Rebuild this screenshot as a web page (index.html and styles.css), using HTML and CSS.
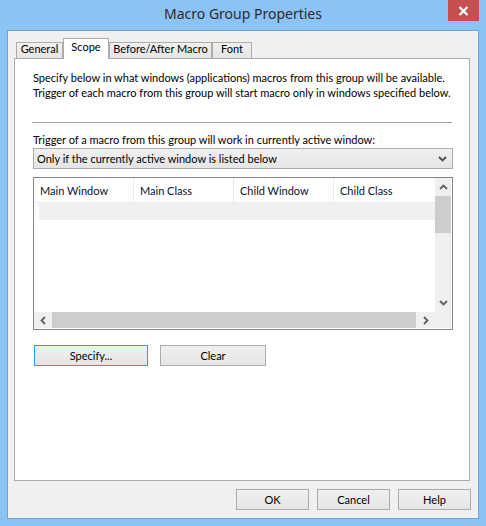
FILE: index.html
```html
<!DOCTYPE html>
<html>
<head>
<meta charset="utf-8">
<link rel="stylesheet" href="styles.css">
</head>
<body>
<div class="window">
  <div class="titlebar">
    <span class="tb-spacer"></span>
    <div class="title">Macro Group Properties</div>
    <div class="tb-right">
      <div class="close">
        <svg width="11" height="10" viewBox="0 0 11 10"><path d="M1.5 1 L9.5 9 M9.5 1 L1.5 9" stroke="#fff" stroke-width="2.2" fill="none"/></svg>
      </div>
    </div>
  </div>
  <div class="client">
    <div class="tabs">
      <div class="tab t-general">General</div>
      <div class="tab selected t-scope">Scope</div>
      <div class="tab t-ba">Before/After Macro</div>
      <div class="tab t-font">Font</div>
    </div>
    <div class="panel">
      <p class="intro">Specify below in what windows (applications) macros from this group will be available.<br>Trigger of each macro from this group will start macro only in windows specified below.</p>
      <div class="sep"></div>
      <div class="label">Trigger of a macro from this group will work in currently active window:</div>
      <div class="combo">
        <span>Only if the currently active window is listed below</span>
        <svg class="chev" width="9" height="6" viewBox="0 0 9 6"><path d="M1 1 L4.5 4.5 L8 1" stroke="#4d4d4d" stroke-width="1.8" fill="none"/></svg>
      </div>
      <div class="list">
        <div class="list-main">
          <div class="header">
            <div class="col">Main Window</div>
            <div class="col">Main Class</div>
            <div class="col">Child Window</div>
            <div class="col last">Child Class</div>
          </div>
          <div class="row-sel"></div>
        </div>
        <div class="vscroll">
          <div class="sb-btn v"><svg width="9" height="6" viewBox="0 0 9 6"><path d="M1 5 L4.5 1.5 L8 5" stroke="#606060" stroke-width="1.8" fill="none"/></svg></div>
          <div class="vthumb"></div>
          <div class="vtrack"></div>
          <div class="sb-btn v"><svg width="9" height="6" viewBox="0 0 9 6"><path d="M1 1 L4.5 4.5 L8 1" stroke="#606060" stroke-width="1.8" fill="none"/></svg></div>
        </div>
        <div class="hscroll">
          <div class="sb-btn h"><svg width="6" height="9" viewBox="0 0 6 9"><path d="M5 1 L1.5 4.5 L5 8" stroke="#606060" stroke-width="1.8" fill="none"/></svg></div>
          <div class="hthumb"></div>
          <div class="htrack"></div>
          <div class="sb-btn h"><svg width="6" height="9" viewBox="0 0 6 9"><path d="M1 1 L4.5 4.5 L1 8" stroke="#606060" stroke-width="1.8" fill="none"/></svg></div>
        </div>
        <div class="corner"></div>
      </div>
      <div class="actions">
        <button class="btn focused b-specify">Specify...</button>
        <button class="btn b-clear">Clear</button>
      </div>
    </div>
    <div class="footer">
      <button class="btn b-foot">OK</button>
      <button class="btn b-foot">Cancel</button>
      <button class="btn b-foot">Help</button>
    </div>
  </div>
</div>
</body>
</html>
```
FILE: styles.css
```css
* { box-sizing: border-box; }
html, body { margin: 0; padding: 0; }
body {
  width: 486px;
  height: 526px;
  overflow: hidden;
  font-family: "Lato", "Noto Sans", sans-serif;
  font-size: 11px;
  color: #000;
}
.window {
  width: 486px;
  height: 526px;
  background: #8cc3f6;
  display: flex;
  flex-direction: column;
}
.titlebar {
  height: 30px;
  display: grid;
  grid-template-columns: 1fr auto 1fr;
}
.title {
  margin-top: 4px;
  font-family: "Noto Sans", sans-serif;
  font-size: 14px;
  line-height: 20px;
  color: #2b2b2b;
  white-space: nowrap;
}
.tb-right {
  display: flex;
  justify-content: flex-end;
  align-items: flex-start;
  padding-right: 7px;
}
.close {
  width: 31px;
  height: 21px;
  background: #c7504f;
  display: flex;
  align-items: center;
  justify-content: center;
}
.client {
  margin: 0 7px;
  width: 472px;
  height: 489px;
  border: 1px solid #6fa3d6;
  background: #f0f0f0;
  display: flex;
  flex-direction: column;
}
.tabs {
  display: flex;
  align-items: flex-end;
  padding: 7px 0 0 8px;
  height: 28px;
  position: relative;
  z-index: 1;
}
.tab {
  height: 16px;
  margin-bottom: 1px;
  border: 1px solid #acacac;
  border-bottom: none;
  background: linear-gradient(#f0f0f0, #e5e5e5);
  text-align: center;
  line-height: 12px;
  padding-top: 0;
  white-space: nowrap;
}
.tab.selected {
  height: 21px;
  margin-bottom: 0;
  background: #fff;
  padding-top: 2px;
}
.t-general { width: 47px; }
.t-scope { width: 46px; }
.t-ba { width: 103px; }
.t-font { width: 40px; }
.panel {
  margin: -1px 0 0 6px;
  width: 456px;
  height: 423px;
  border: 1px solid #acacac;
  background: #fff;
  padding: 11px 16px 0 18px;
}
.intro {
  margin: 0;
  line-height: 15px;
  white-space: nowrap;
}
.sep {
  margin: 22px 1px 0 -1px;
  height: 1px;
  background: #a0a0a0;
}
.label {
  margin-top: 9px;
  line-height: 15px;
  white-space: nowrap;
}
.combo {
  margin-top: 1px;
  height: 21px;
  border: 1px solid #acacac;
  background: linear-gradient(#f0f0f0, #e5e5e5);
  display: flex;
  align-items: center;
  justify-content: space-between;
  padding: 0 5px 0 3px;
  line-height: 17px;
}
.list {
  margin-top: 8px;
  height: 153px;
  border: 1px solid #828790;
  padding: 0 1px 1px 0;
  display: grid;
  grid-template-columns: 1fr 16px;
  grid-template-rows: 1fr 16px;
  background: #fff;
}
.list-main { overflow: hidden; }
.header {
  display: flex;
  height: 25px;
  border-bottom: 1px solid #e5ecf6;
}
.col {
  width: 100px;
  flex: none;
  border-right: 1px solid #e5ecf6;
  padding: 1px 0 0 6px;
  line-height: 24px;
  color: #101030;
  white-space: nowrap;
}
.col.last { border-right: none; }
.row-sel {
  margin-left: 5px;
  height: 17px;
  background: #f0f0f0;
}
.vscroll {
  background: #f0f0f0;
  display: flex;
  flex-direction: column;
}
.hscroll {
  background: #f0f0f0;
  display: flex;
}
.corner { background: #f0f0f0; }
.sb-btn {
  display: flex;
  align-items: center;
  justify-content: center;
  flex: none;
}
.sb-btn.v { height: 18px; }
.sb-btn.h { width: 18px; }
.vthumb { height: 37px; background: #cdcdcd; flex: none; }
.vtrack { flex: 1; }
.hthumb { width: 364px; background: #cdcdcd; flex: none; }
.htrack { flex: 1; }
.actions {
  margin-top: 15px;
  display: flex;
}
.btn {
  font-family: inherit;
  font-size: 11px;
  color: #000;
  height: 21px;
  border: 1px solid #acacac;
  background: linear-gradient(#f0f0f0, #e5e5e5);
  line-height: 18px;
  padding: 1px 0 0 0;
  margin: 0;
  border-radius: 0;
  text-align: center;
}
.btn.focused { border-color: #3399ff; }
.b-specify { width: 114px; margin-left: 1px; }
.b-clear { width: 106px; margin-left: 12px; }
.footer {
  margin-top: 8px;
  display: flex;
  justify-content: flex-end;
  gap: 8px;
  padding-right: 7px;
}
.b-foot { width: 73px; }
```
